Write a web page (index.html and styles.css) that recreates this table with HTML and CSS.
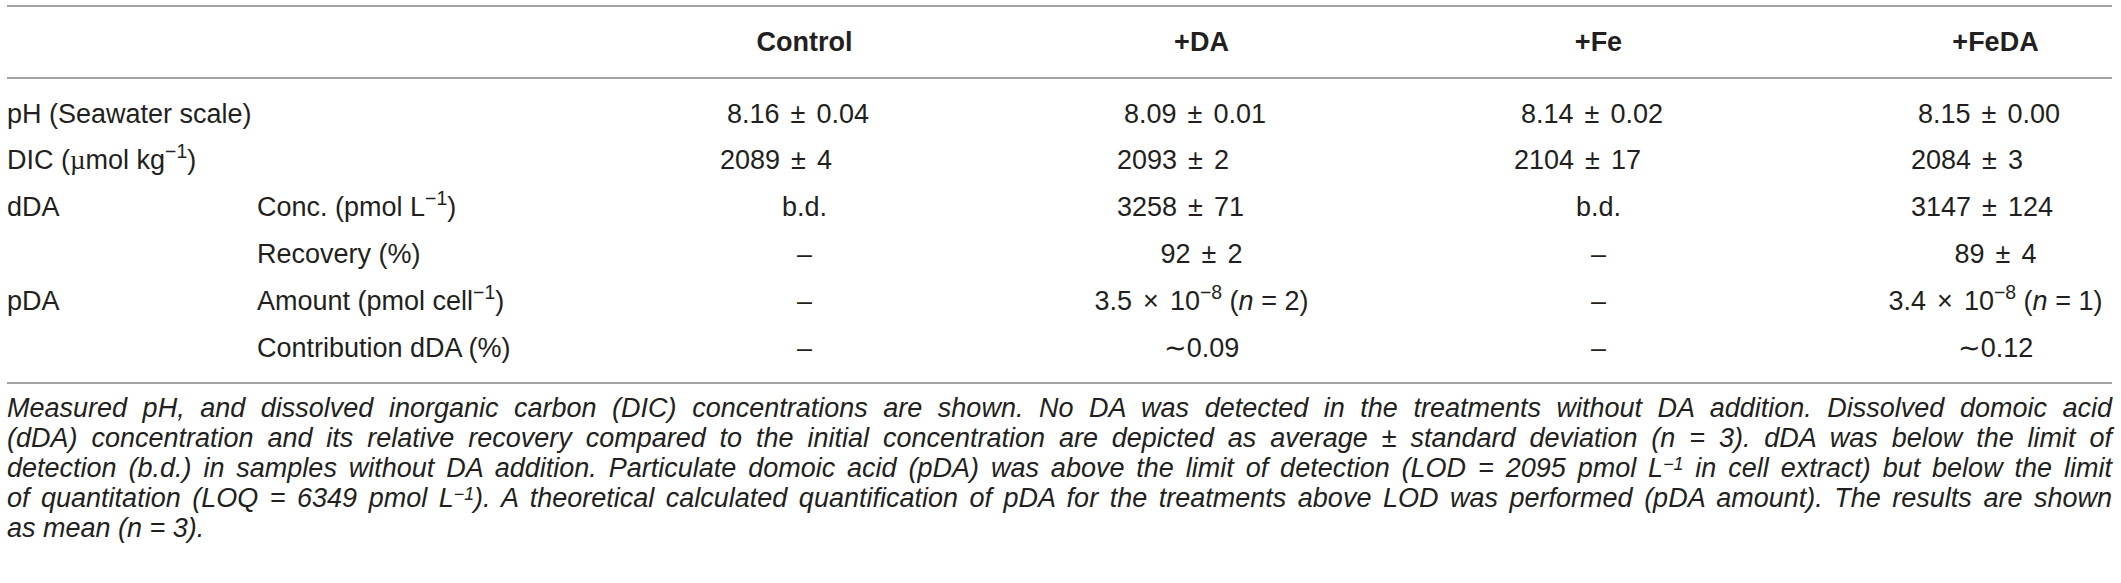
FILE: index.html
```html
<!DOCTYPE html>
<html lang="en">
<head>
    <meta charset="UTF-8">
    <meta name="viewport" content="width=device-width, initial-scale=1.0">
    <title>Table 1</title>
    <link rel="stylesheet" href="styles.css">
</head>
<body>

    <div class="page">
        <table class="data-table">
            <colgroup>
                <col class="col-label">
                <col class="col-sub">
                <col class="col-val">
                <col class="col-val">
                <col class="col-val">
                <col class="col-last">
            </colgroup>
            <thead>
                <tr>
                    <th></th>
                    <th></th>
                    <th>Control</th>
                    <th>+DA</th>
                    <th>+Fe</th>
                    <th class="last">+FeDA</th>
                </tr>
            </thead>
            <tbody>
                <tr class="first">
                    <td colspan="2">pH (Seawater scale)</td>
                    <td class="num ind">8.16<span class="op">±</span>0.04</td>
                    <td class="num ind">8.09<span class="op">±</span>0.01</td>
                    <td class="num ind">8.14<span class="op">±</span>0.02</td>
                    <td class="num ind">8.15<span class="op">±</span>0.00</td>
                </tr>
                <tr>
                    <td colspan="2">DIC (<span class="mu">µ</span>mol kg<sup>−1</sup>)</td>
                    <td class="num">2089<span class="op">±</span>4</td>
                    <td class="num">2093<span class="op">±</span>2</td>
                    <td class="num">2104<span class="op">±</span>17</td>
                    <td class="num">2084<span class="op">±</span>3</td>
                </tr>
                <tr>
                    <td>dDA</td>
                    <td>Conc. (pmol L<sup>−1</sup>)</td>
                    <td class="mid">b.d.</td>
                    <td class="num">3258<span class="op">±</span>71</td>
                    <td class="mid">b.d.</td>
                    <td class="num">3147<span class="op">±</span>124</td>
                </tr>
                <tr>
                    <td></td>
                    <td>Recovery (%)</td>
                    <td class="mid">–</td>
                    <td class="mid">92<span class="op">±</span>2</td>
                    <td class="mid">–</td>
                    <td class="mid last">89<span class="op">±</span>4</td>
                </tr>
                <tr>
                    <td>pDA</td>
                    <td>Amount (pmol cell<sup>−1</sup>)</td>
                    <td class="mid">–</td>
                    <td class="mid">3.5<span class="op">×</span>10<sup>−8</sup> (<i>n</i> = 2)</td>
                    <td class="mid">–</td>
                    <td class="mid last">3.4<span class="op">×</span>10<sup>−8</sup> (<i>n</i> = 1)</td>
                </tr>
                <tr class="end">
                    <td></td>
                    <td>Contribution dDA (%)</td>
                    <td class="mid">–</td>
                    <td class="mid">∼0.09</td>
                    <td class="mid">–</td>
                    <td class="mid last">∼0.12</td>
                </tr>
            </tbody>
        </table>

        <p class="caption">
            <span class="line">Measured pH, and dissolved inorganic carbon (DIC) concentrations are shown. No DA was detected in the treatments without DA addition. Dissolved domoic acid</span>
            <span class="line">(dDA) concentration and its relative recovery compared to the initial concentration are depicted as average ± standard deviation (n = 3). dDA was below the limit of</span>
            <span class="line">detection (b.d.) in samples without DA addition. Particulate domoic acid (pDA) was above the limit of detection (LOD = 2095 pmol L<sup>−1</sup> in cell extract) but below the limit</span>
            <span class="line">of quantitation (LOQ = 6349 pmol L<sup>−1</sup>). A theoretical calculated quantification of pDA for the treatments above LOD was performed (pDA amount). The results are shown</span>
            <span class="line last-line">as mean (n = 3).</span>
        </p>
    </div>

</body>
</html>
```

FILE: styles.css
```css
* {
    margin: 0;
    padding: 0;
    box-sizing: border-box;
}

body {
    background: #fff;
    color: #231f20;
    font-family: 'Liberation Sans', Arial, sans-serif;
    font-size: 27px;
}

.page {
    padding: 5px 9px 0 7px;
}

.data-table {
    width: 2105px;
    border-collapse: collapse;
    table-layout: fixed;
}

.col-label { width: 250px; }
.col-sub { width: 349px; }
.col-val { width: 397px; }
.col-last { width: 315px; }

.data-table thead tr {
    border-top: 2px solid #a3a3a3;
    border-bottom: 2px solid #a3a3a3;
}

.data-table th {
    height: 72px;
    font-weight: bold;
    text-align: center;
    vertical-align: middle;
}

.data-table td {
    height: 47px;
    padding: 0;
    white-space: nowrap;
    vertical-align: middle;
}

.data-table tbody tr.first td {
    padding-top: 12px;
    height: 59px;
}

.data-table tbody tr.end {
    border-bottom: 2px solid #a3a3a3;
}

.data-table tbody tr.end td {
    padding-bottom: 11px;
    height: 58px;
}

.data-table td.num {
    text-align: left;
    padding-left: 114px;
}

.data-table td.num.ind {
    padding-left: 121px;
}

.data-table td.mid {
    text-align: center;
}

.data-table th.last,
.data-table td.mid.last {
    padding-left: 82px;
}

/* wider gaps round ± and × like the typeset table */
.op {
    margin: 0 11px;
}

.mu {
    font-family: 'Liberation Serif', serif;
}

sup {
    font-size: 0.72em;
    line-height: 0;
    vertical-align: 0.55em;
}

/* caption under table */
.caption {
    width: 2105px;
    margin-top: 9px;
    font-size: 27px;
    font-style: italic;
    line-height: 30px;
}

.caption sup {
    font-size: 0.66em;
    vertical-align: 0.42em;
}

.caption .line {
    display: block;
    text-align: justify;
    text-align-last: justify;
}

.caption .last-line {
    text-align-last: left;
}
```
